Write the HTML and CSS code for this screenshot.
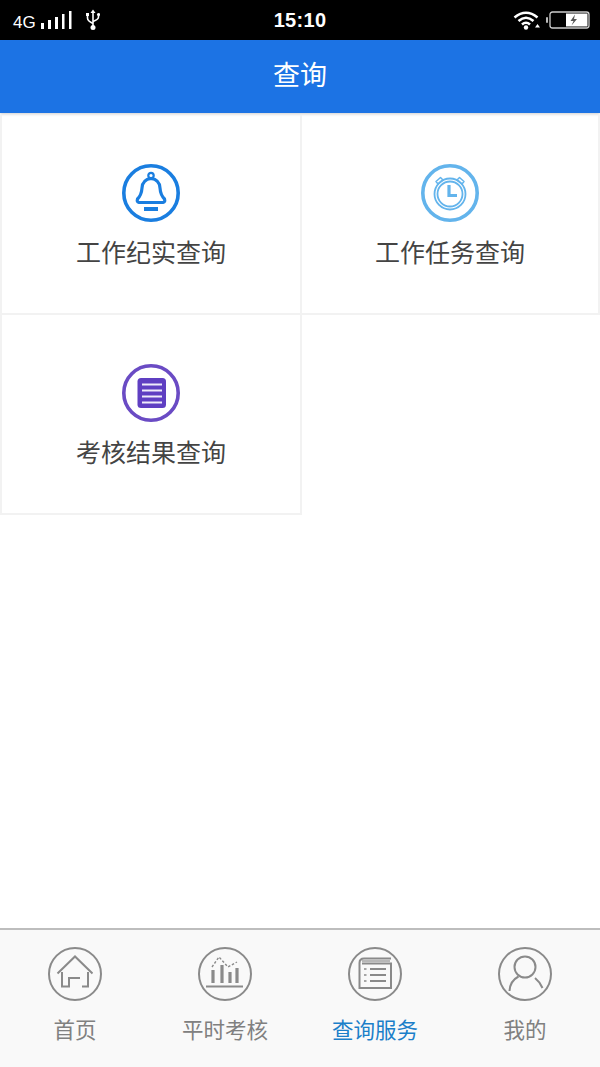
FILE: index.html

```html
<!DOCTYPE html>
<html lang="zh-CN">
<head>
  <meta charset="UTF-8">
  <title>查询</title>
  <link rel="stylesheet" href="styles.css">
</head>
<body>

<div class="page">
  <div class="status-bar">
    <div class="status-left">
      <span class="net">4G</span>
      <svg class="signal" width="31" height="18" viewBox="0 0 31 18" fill="#fff">
        <rect x="0" y="12" width="3" height="6"/>
        <rect x="7" y="9" width="3" height="9"/>
        <rect x="14" y="6" width="3" height="12"/>
        <rect x="21" y="3" width="2.5" height="15"/>
        <rect x="28" y="0" width="2.5" height="18"/>
      </svg>
      <svg class="usb" width="14" height="22" viewBox="0 0 14 22" fill="none" stroke="#fff" stroke-width="1.6">
        <path d="M7 3V18"/>
        <path d="M7 0.5L4.5 4H9.5Z" fill="#fff" stroke="none"/>
        <path d="M1.5 7V9Q1.5 12 7 14.5"/>
        <path d="M12.5 7V8Q12.5 10.5 7 12.5"/>
        <rect x="0" y="4" width="3" height="3" fill="#fff" stroke="none"/>
        <circle cx="12.5" cy="5.5" r="1.6" fill="#fff" stroke="none"/>
        <circle cx="7" cy="18.5" r="2.5" fill="#fff" stroke="none"/>
      </svg>
    </div>
    <div class="time">15:10</div>
    <div class="status-right">
      <svg width="28" height="20" viewBox="0 0 28 20" fill="none" stroke="#fff" stroke-width="2.6">
        <path d="M1.5 7.5Q13 -2 24.5 7.5"/>
        <path d="M5.5 11Q13 4.5 20.5 11"/>
        <path d="M9 14.5Q13 11 17 14.5"/>
        <circle cx="13" cy="17.5" r="2.2" fill="#fff" stroke="none"/>
        <path d="M22 17.5H27L24.5 14Z" fill="#fff" stroke="none"/>
      </svg>
      <svg width="44" height="18" viewBox="0 0 44 18">
        <rect x="0" y="6" width="2" height="6" rx="1" fill="#bbb"/>
        <rect x="4" y="1" width="39" height="16" rx="2.5" fill="#000" stroke="#ccc" stroke-width="1.3"/>
        <rect x="20" y="2.5" width="21.5" height="13" fill="#fff"/>
        <path d="M29 3.5L24.5 10H27.5L25.5 14.5L31 8H28Z" fill="#555"/>
      </svg>
    </div>
  </div>

  <header class="title-bar">查询</header>

  <main class="query-grid">
    <a class="query-cell">
      <svg class="query-icon" viewBox="0 0 58 58" fill="none" stroke="#1a7ee0">
        <circle cx="29" cy="29" r="27.2" stroke-width="3.6"/>
        <path d="M15.5 35Q19.5 31 20 24Q20.5 15.5 29 14.5Q37.5 15.5 38 24Q38.5 31 42.5 35Q43.5 38 41 38.5H17Q14.5 38 15.5 35Z" stroke-width="3.2" stroke-linejoin="round"/>
        <circle cx="29" cy="11.5" r="2.7" stroke-width="2.2"/>
        <rect x="22" y="43" width="14" height="4" fill="#1a7ee0" stroke="none"/>
      </svg>
      <span>工作纪实查询</span>
    </a>
    <a class="query-cell">
      <svg class="query-icon" viewBox="0 0 58 58" fill="none" stroke="#63b4ec">
        <circle cx="29" cy="29" r="27.2" stroke-width="3.6"/>
        <circle cx="29" cy="30" r="15.5" stroke-width="1.8"/>
        <circle cx="29" cy="30" r="12.5" stroke-width="1.8"/>
        <path d="M28 21V31.5H36" stroke-width="3.2"/>
        <path d="M15 17.5L19.5 13.5L22 16L17 20Z M43 17.5L38.5 13.5L36 16L41 20Z" stroke-width="1.5" stroke-linejoin="round"/>
      </svg>
      <span>工作任务查询</span>
    </a>
    <a class="query-cell">
      <svg class="query-icon" viewBox="0 0 58 58" fill="none" stroke="#6a4bc4">
        <circle cx="29" cy="29" r="27.2" stroke-width="3.6"/>
        <rect x="15.5" y="14" width="28.5" height="30" rx="3.5" fill="#5f3fc2" stroke="none"/>
        <path d="M20 20.5H40M20 26.5H40M20 32.5H40M20 38.5H40" stroke="#efecfa" stroke-width="1.8"/>
      </svg>
      <span>考核结果查询</span>
    </a>
  </main>

  <nav class="tab-bar">
    <a class="tab">
      <svg class="tab-icon" viewBox="0 0 54 54" fill="none" stroke="#8a8a8a" stroke-width="2">
        <circle cx="27" cy="27" r="26"/>
        <path d="M9.5 26.5L27 9.5L44.5 26.5"/>
        <path d="M14 25V39.5H21V31H32"/>
        <path d="M40 25V39.5H34"/>
      </svg>
      <span>首页</span>
    </a>
    <a class="tab">
      <svg class="tab-icon" viewBox="0 0 54 54" fill="none" stroke="#8a8a8a">
        <circle cx="27" cy="27" r="26" stroke-width="2"/>
        <path d="M8 39.5H45" stroke-width="2.2"/>
        <path d="M15 36V23M24 36V18M32 36V25M39 36V21" stroke-width="3.2"/>
        <path d="M14 20L21 10L30 20L39 15" stroke-width="1.4" stroke-dasharray="2.5 1.8"/>
      </svg>
      <span>平时考核</span>
    </a>
    <a class="tab">
      <svg class="tab-icon" viewBox="0 0 54 54" fill="none" stroke="#8a8a8a" stroke-width="2">
        <circle cx="27" cy="27" r="26"/>
        <path d="M43 11.5H16Q11.5 11.5 11.5 16V41H43V16.5H14"/>
        <path d="M14 14H42" stroke-width="1.2"/>
        <path d="M22 22H38M22 28H38M22 34H38" stroke-width="2.2"/>
        <path d="M16 22H18.5M16 28H18.5M16 34H18.5" stroke-width="1.5"/>
      </svg>
      <span>查询服务</span>
    </a>
    <a class="tab">
      <svg class="tab-icon" viewBox="0 0 54 54" fill="none" stroke="#8a8a8a" stroke-width="2">
        <circle cx="27" cy="27" r="26"/>
        <circle cx="27" cy="20" r="10.5"/>
        <path d="M11.5 44Q12 34 20.5 29.5"/>
        <path d="M44.5 41Q42 35 37 31"/>
      </svg>
      <span>我的</span>
    </a>
  </nav>
</div>

</body>
</html>
```

FILE: styles.css

```css
* { box-sizing: border-box; }

body {
  margin: 0;
  font-family: "Noto Sans CJK SC", "Liberation Sans", sans-serif;
  background-color: #fff;
}

.page {
  display: flex;
  flex-direction: column;
  height: 1067px;
  overflow: hidden;
}

.status-bar {
  position: relative;
  display: flex;
  justify-content: space-between;
  align-items: center;
  height: 40px;
  padding: 0 10px 0 13px;
  background-color: #000;
  color: #fff;
}

.status-left {
  display: flex;
  align-items: center;
}

.net {
  font-family: "Liberation Sans", sans-serif;
  font-size: 17px;
  margin-top: 6px;
}

.signal { margin-left: 5px; }
.usb { margin-left: 14px; }

.time {
  position: absolute;
  left: 0;
  right: 0;
  text-align: center;
  font-family: "Liberation Sans", sans-serif;
  font-size: 20px;
  font-weight: bold;
  line-height: 41px;
  letter-spacing: 0.3px;
}

.status-right {
  display: flex;
  align-items: center;
  gap: 5px;
}

.title-bar {
  height: 73px;
  line-height: 67px;
  text-align: center;
  font-size: 27px;
  color: #fff;
  background-color: #1c73e4;
  box-shadow: 0 1px 3px rgba(0,0,0,0.2);
}

.query-grid {
  flex: 1;
  display: grid;
  grid-template-columns: 302px 298px;
  grid-auto-rows: 200px;
  align-content: start;
  padding-top: 2px;
  border-bottom: 2px solid #bdbdbd;
}

.query-cell {
  display: flex;
  flex-direction: column;
  align-items: center;
  padding-top: 49px;
  border-right: 2px solid #f2f2f2;
  border-bottom: 2px solid #f2f2f2;
  color: #444;
  font-size: 25px;
  line-height: 36px;
}

.query-cell:nth-child(odd) { border-left: 2px solid #f2f2f2; }

.query-icon {
  width: 58px;
  height: 58px;
  margin-bottom: 11px;
}

.tab-bar {
  display: grid;
  grid-template-columns: repeat(4, 150px);
  height: 137px;
  background-color: #f9f9f9;
}

.tab {
  display: flex;
  flex-direction: column;
  align-items: center;
  padding-top: 17px;
  font-size: 21.5px;
  line-height: 32px;
  color: #808080;
}

.tab:nth-child(3) { color: #1b7fc9; }

.tab-icon {
  width: 54px;
  height: 54px;
  margin-bottom: 12px;
  flex: none;
}
```
